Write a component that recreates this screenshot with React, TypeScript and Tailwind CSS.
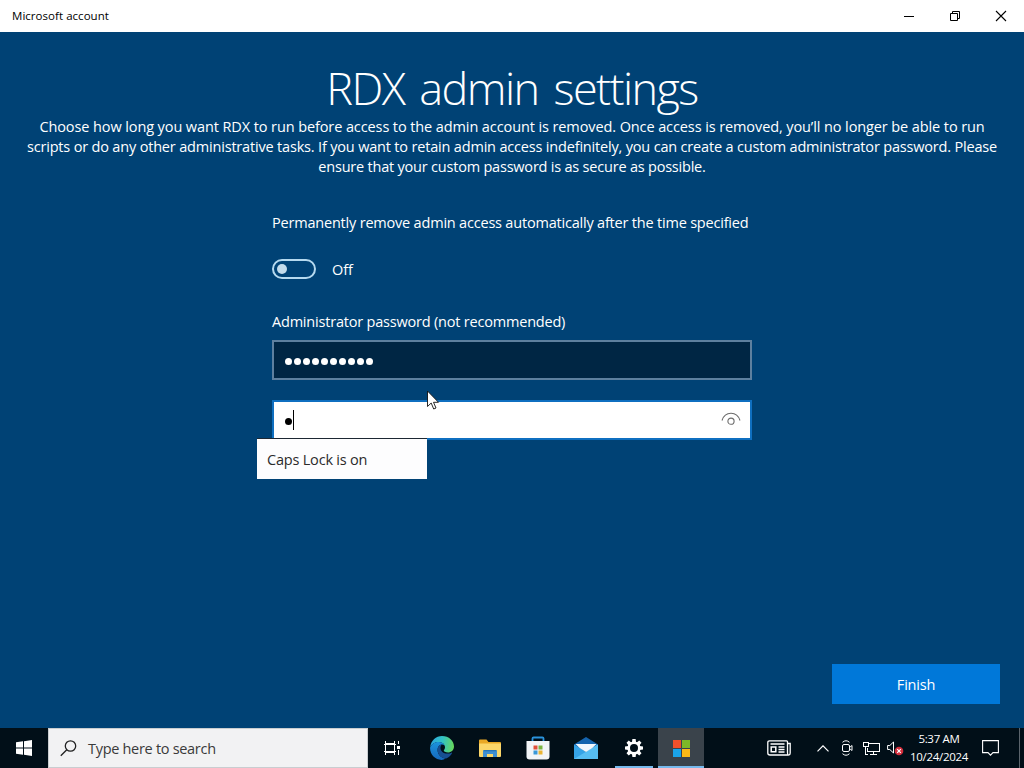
import React, { useState } from "react";

const introLines = [
  {
    text: "Choose how long you want RDX to run before access to the admin account is removed. Once access is removed, you’ll no longer be able to run",
    className: "tracking-[-0.1px]",
  },
  {
    text: "scripts or do any other administrative tasks. If you want to retain admin access indefinitely, you can create a custom administrator password. Please",
    className: "tracking-[-0.18px]",
  },
  {
    text: "ensure that your custom password is as secure as possible.",
    className: "tracking-[-0.21px]",
  },
];

function TitleBar() {
  return (
    <header className="flex h-8 shrink-0 items-center justify-between bg-white text-black">
      <span className="pl-3 text-[11.5px] leading-4 tracking-[0.04px]">
        Microsoft account
      </span>
      <div className="flex">
        <button className="flex h-8 w-[46px] items-center justify-center" aria-label="Minimize">
          <svg width="10" height="10" viewBox="0 0 10 10" shapeRendering="crispEdges">
            <path d="M0 5.5h10" stroke="#000" />
          </svg>
        </button>
        <button className="flex h-8 w-[46px] items-center justify-center" aria-label="Restore">
          <svg width="10" height="10" viewBox="0 0 10 10" fill="none" stroke="#000">
            <path d="M0.5 2.5h7v7h-7zM2.5 2.5v-2h7v7h-2" />
          </svg>
        </button>
        <button className="flex h-8 w-[46px] items-center justify-center" aria-label="Close">
          <svg width="12" height="12" viewBox="0 0 12 12" stroke="#000" strokeWidth="1.1">
            <path d="M1 1l10 10M11 1L1 11" />
          </svg>
        </button>
      </div>
    </header>
  );
}

function Dots({ count, className }: { count: number; className: string }) {
  return (
    <div className="flex gap-[2px]">
      {Array.from({ length: count }, (_, i) => (
        <span key={i} className={`size-[7px] rounded-full ${className}`} />
      ))}
    </div>
  );
}

function Toggle() {
  const [on, setOn] = useState(false);

  return (
    <div className="flex h-5 items-center gap-4">
      <button
        role="switch"
        aria-checked={on}
        aria-label="Remove admin access"
        onClick={() => setOn(!on)}
        className={`flex h-5 w-11 items-center rounded-full border-2 border-[#b5d9ef] px-[3px] ${on ? "justify-end" : ""}`}
      >
        <span className="size-[10px] rounded-full bg-[#c3dcec]" />
      </button>
      <span className="pt-px text-[14.5px] leading-5 tracking-[-0.1px]">{on ? "On" : "Off"}</span>
    </div>
  );
}

function SettingsForm() {
  return (
    <div className="mx-auto mt-9 w-[480px]">
      <p className="text-[14.5px] leading-5 tracking-[-0.2px] whitespace-nowrap">
        Permanently remove admin access automatically after the time specified
      </p>
      <div className="mt-[26px]">
        <Toggle />
      </div>
      <p className="mt-[33px] text-[14.5px] leading-5 tracking-[-0.2px]">
        Administrator password (not recommended)
      </p>
      <div className="mt-2 flex h-10 items-center border-2 border-[#5e809f] bg-[#002644] pt-[3px] pl-[11px]">
        <Dots count={10} className="bg-white" />
      </div>
      <div className="relative mt-5 flex h-10 items-center justify-between border-2 border-[#0f6fc0] bg-white pr-[9px] pl-[11px]">
        <div className="flex items-center gap-px">
          <div className="pt-[3px]">
            <Dots count={1} className="bg-black" />
          </div>
          <span className="-mt-px h-5 w-px bg-black" />
        </div>
        <svg width="20" height="16" viewBox="0 0 20 16" fill="none" stroke="#6b6b6b" strokeWidth="1.1">
          <path d="M1 8.500C2.400 4 5.800 1.300 10 1.300s7.600 2.700 9 7.200" />
          <circle cx="10" cy="9.200" r="3.100" />
        </svg>
        <div className="absolute top-[36px] -left-[17px] flex h-[41px] w-[170px] items-center border-t border-[#1c2733] bg-[#fdfdfe] pt-[2px] pl-[10px] text-[14.5px] tracking-[-0.2px] text-[#2b2b2b]">
          Caps Lock is on
        </div>
        <svg className="absolute -top-[12px] left-[153px]" width="13" height="20" viewBox="0 0 13 20">
          <path
            d="M0.500 1v15.500l3.700-3.500 2.500 6 2.300-1-2.500-5.700h5z"
            fill="#fff"
            stroke="#111"
            strokeWidth="0.900"
          />
        </svg>
      </div>
    </div>
  );
}

function StartIcon() {
  return (
    <svg width="16" height="16" viewBox="0 0 16 16" fill="#fff">
      <path d="M0 2.300L7 1.300V7.500H0zM8 1.150L16 0v7.500H8zM0 8.500h7v6.200L0 13.700zM8 8.500h8V16L8 14.850z" />
    </svg>
  );
}

function TaskViewIcon() {
  return (
    <svg width="16" height="16" viewBox="0 0 16 16" fill="none" stroke="#fff" shapeRendering="crispEdges">
      <path d="M1.500 1v2.500h9V1M1.500 3.500v9M10.500 3.500v9M0 4.500h12M0 11.500h12M1.500 15v-2.500h9V15M14.500 1v3M14.500 10v5" />
      <path d="M13 6h3v3h-3z" fill="#fff" stroke="none" />
    </svg>
  );
}

function EdgeIcon() {
  return (
    <svg width="24" height="24" viewBox="0 0 24 24">
      <defs>
        <linearGradient id="edgeTop" x1="0" y1="0.400" x2="1" y2="0.500">
          <stop offset="0" stopColor="#2ba6e0" />
          <stop offset="0.500" stopColor="#32c3c4" />
          <stop offset="1" stopColor="#68d85a" />
        </linearGradient>
        <linearGradient id="edgeSide" x1="0" y1="0" x2="0" y2="1">
          <stop offset="0" stopColor="#1b93dc" />
          <stop offset="1" stopColor="#1668bd" />
        </linearGradient>
      </defs>
      <path d="M0.200 11C1 4.500 6 0 12 0c7 0 12 5 12 10.500 0 3.800-3 6-6 6-2.600 0-4.200-1-4.200-1.900 0-.8 1.200-1.200 1.200-3.300C15 8.500 12.400 6 8.700 6 4.800 6 1.500 8 .2 11z" fill="url(#edgeTop)" />
      <path d="M.1 11.500C1.500 8 4.800 6 8.700 6c3 0 5.300 1.600 6 3.800C14 9 13 8.600 12 8.600c-2.500 0-4.400 2.500-4.400 5.400 0 4.500 3.500 8 8 8.500-1.200.8-2.500 1.300-4 1.400C5.200 24-.4 18.500.1 11.500z" fill="url(#edgeSide)" />
      <path d="M12 8.600c-2.500 0-4.400 2.500-4.400 5.400 0 4.700 3.800 8.500 8.600 8.500 2.700-1.200 4.800-3.200 5.800-5.200.3-.6-.2-.9-.7-.6-1 .6-2.300.9-3.800.9-4.300 0-7-2.700-7-5.700 0-1.500.7-2.600 1.500-3.300z" fill="#174f91" />
    </svg>
  );
}

function ExplorerIcon() {
  return (
    <svg width="22" height="19" viewBox="0 0 22 19">
      <path d="M0 1.500Q0 .5 1 .5h6.500L9.500 3H21q1 0 1 1v13H0z" fill="#e9a825" />
      <path d="M0 4.500h22V17q0 1-1 1H1q-1 0-1-1z" fill="#fbd669" />
      <path d="M4 18v-5.500Q4 11 5.500 11h11q1.500 0 1.500 1.500V18h-4v-3H8v3z" fill="#3f8fd2" />
      <path d="M4.500 11h13v1.300h-13z" fill="#2574b8" />
    </svg>
  );
}

function StoreIcon() {
  return (
    <svg width="24" height="24" viewBox="0 0 24 24">
      <path d="M6.500 6V2.600Q6.500 1.500 7.600 1.500h8.800q1.100 0 1.100 1.100V6" fill="none" stroke="#2a93dc" strokeWidth="1.800" />
      <path d="M.5 5h23v15.500q0 3-3 3h-17q-3 0-3-3z" fill="#f2f5f7" />
      <path d="M7.500 9.500h4v4h-4z" fill="#e0503a" />
      <path d="M12.500 9.500h4v4h-4z" fill="#7ab541" />
      <path d="M7.500 14.500h4v4h-4z" fill="#3998d8" />
      <path d="M12.500 14.500h4v4h-4z" fill="#eab534" />
    </svg>
  );
}

function MailIcon() {
  return (
    <svg width="24" height="23" viewBox="0 0 24 23">
      <path d="M0 7.500L12 0l12 7.500v6H0z" fill="#1464ae" />
      <path d="M0 7.500l12 7.200 12-7.200V22H0z" fill="#36a3e6" />
      <path d="M0 22L12 14.700 24 7.500V22z" fill="#56bdf2" />
      <path d="M1.500 7h21l-4.200 4L12 15 5.700 11z" fill="#f2f8fd" />
    </svg>
  );
}

function GearIcon() {
  const teeth = [0, 45, 90, 135, 180, 225, 270, 315];

  return (
    <svg width="20" height="20" viewBox="0 0 20 20">
      <circle cx="10" cy="10" r="5.300" fill="none" stroke="#fff" strokeWidth="2.600" />
      {teeth.map((angle) => (
        <path
          key={angle}
          d="M8.400 1h3.200l.5 3.500H7.900z"
          fill="#fff"
          transform={`rotate(${angle} 10 10)`}
        />
      ))}
    </svg>
  );
}

function MicrosoftIcon() {
  return (
    <svg width="17" height="17" viewBox="0 0 17 17" shapeRendering="crispEdges">
      <path d="M0 0h8v8H0z" fill="#f0502b" />
      <path d="M9 0h8v8H9z" fill="#7db928" />
      <path d="M0 9h8v8H0z" fill="#1aa4ea" />
      <path d="M9 9h8v8H9z" fill="#fbb917" />
    </svg>
  );
}

function NewsIcon() {
  return (
    <svg width="24" height="16" viewBox="0 0 24 16" fill="none" stroke="#fff" strokeWidth="1.300">
      <path d="M.8 2.500Q.8.800 2.500.8h17q1 0 1 1V13q0 2 1.300 2H3Q.8 15 .8 13z" />
      <path d="M20.500 3.500h2.700V13q0 2-1.500 2M3.500 4h14M11.500 7h6M11.500 9.500h6M11.500 12h6" />
      <path d="M4.200 7h4.600v4.800H4.200z" strokeWidth="1.500" />
    </svg>
  );
}

function TrayIcons() {
  return (
    <div className="flex items-center">
      <div className="flex w-12 justify-center">
        <NewsIcon />
      </div>
      <div className="ml-2 flex w-6 justify-center">
        <svg width="12" height="7" viewBox="0 0 12 7" fill="none" stroke="#fff" strokeWidth="1.200">
          <path d="M.5 6.300L6 .8l5.500 5.500" />
        </svg>
      </div>
      <div className="flex w-6 justify-center">
        <svg width="12" height="16" viewBox="0 0 12 16" fill="none" stroke="#fff">
          <rect x="1.500" y="4.500" width="7" height="7" rx="1.500" />
          <path d="M8.500 7.500l2.500-2v5l-2.500-2M1.500 2.300Q5-.8 8.500 2.300M1.500 13.700Q5 16.800 8.500 13.700" />
        </svg>
      </div>
      <div className="flex w-6 justify-center">
        <svg width="17" height="15" viewBox="0 0 17 15" fill="none" stroke="#fff" shapeRendering="crispEdges">
          <path d="M6 2.500h10.500v8H4.500V7M10.500 10.500v3M7 13.500h7M.5 1.500h5v4h-5zM2.500 5.500v8h2" />
        </svg>
      </div>
      <div className="flex w-6 justify-center">
        <svg width="17" height="16" viewBox="0 0 17 16">
          <path d="M.6 5.500h2.200L6.500 2v11L2.800 9.500H.6z" fill="none" stroke="#fff" />
          <circle cx="12" cy="11" r="4.300" fill="#d42e3c" />
          <path d="M10.200 9.200l3.600 3.600M13.800 9.200l-3.600 3.600" stroke="#fff" strokeWidth="1.200" />
        </svg>
      </div>
      <div className="flex w-16 flex-col items-center text-[11.5px] leading-[18px] tracking-[-0.3px] whitespace-nowrap">
        <span>5:37 AM</span>
        <span>10/24/2024</span>
      </div>
      <div className="flex w-12 pl-[11px]">
        <svg width="17" height="16" viewBox="0 0 17 16" fill="none" stroke="#fff" strokeWidth="1.100">
          <path d="M.6.600h15.800v12H11L8.500 15.200 6 12.600H.6z" />
        </svg>
      </div>
      <div className="h-10 w-[5px] border-l border-[#5b646c]" />
    </div>
  );
}

function Taskbar() {
  return (
    <footer className="flex h-10 shrink-0 items-center justify-between bg-[#010f18]">
      <div className="flex h-10 items-center">
        <button className="flex h-10 w-12 items-center justify-center" aria-label="Start">
          <StartIcon />
        </button>
        <div className="flex h-10 w-80 items-center border border-[#c9cdd0] bg-[#f2f2f3] pl-[11px] text-[#3a3a3a]">
          <svg width="17" height="17" viewBox="0 0 17 17" fill="none" stroke="#222" strokeWidth="1.300">
            <circle cx="10.500" cy="6" r="5.200" />
            <path d="M6.800 9.700L.8 15.700" />
          </svg>
          <span className="pt-px pl-[11px] text-[14.5px] tracking-[-0.3px]">Type here to search</span>
        </div>
        <div className="flex w-[50px] pl-4">
          <TaskViewIcon />
        </div>
        <div className="flex w-12 justify-center">
          <EdgeIcon />
        </div>
        <div className="flex w-12 justify-center">
          <ExplorerIcon />
        </div>
        <div className="flex w-12 justify-center">
          <StoreIcon />
        </div>
        <div className="flex w-12 justify-center">
          <MailIcon />
        </div>
        <div className="flex h-10 w-12 flex-col items-center justify-between">
          <div className="pt-[10px]">
            <GearIcon />
          </div>
          <div className="h-[2px] w-[38px] bg-[#76b9ed]" />
        </div>
        <div className="flex h-10 w-[46px] flex-col items-center justify-between bg-[#3a434b]">
          <div className="pt-3">
            <MicrosoftIcon />
          </div>
          <div className="h-[2px] w-full bg-[#76b9ed]" />
        </div>
      </div>
      <TrayIcons />
    </footer>
  );
}

export default function App() {
  return (
    <div className="flex h-screen w-screen flex-col overflow-hidden bg-[#004275] font-['Open_Sans','Noto_Sans',sans-serif] text-white">
      <TitleBar />
      <main className="flex flex-1 flex-col pt-7">
        <h1 className="pb-px text-center text-[45px] leading-[56px] font-light tracking-[-1.6px] [word-spacing:5px]">
          RDX admin settings
        </h1>
        <div className="text-center text-[14.5px] leading-5">
          {introLines.map((line) => (
            <p key={line.text} className={`whitespace-nowrap ${line.className}`}>
              {line.text}
            </p>
          ))}
        </div>
        <SettingsForm />
        <div className="mt-auto mb-6 flex justify-end pr-6">
          <button className="h-10 w-[168px] bg-[#0078d9] pt-px text-[14.5px] tracking-[-0.2px]">
            Finish
          </button>
        </div>
      </main>
      <Taskbar />
    </div>
  );
}
